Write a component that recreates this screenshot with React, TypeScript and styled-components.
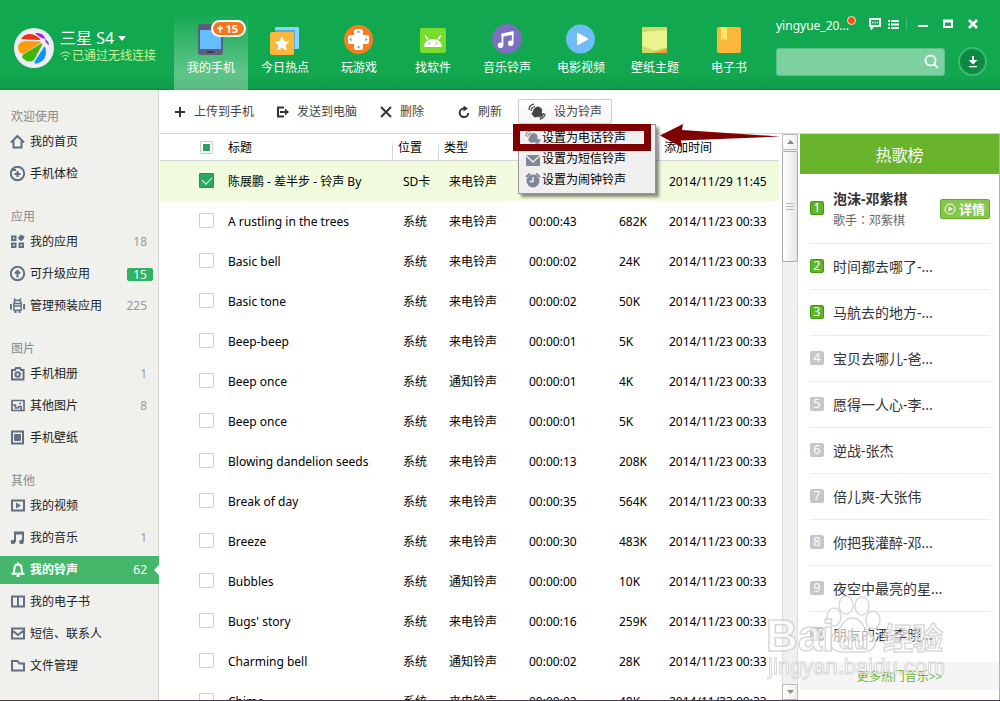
import React from "react";
import styled, { createGlobalStyle, css } from "styled-components";

const Global = createGlobalStyle`
  * { box-sizing: border-box; }
  body {
    margin: 0;
    background: #fff;
    color: #333;
    font-family: "Noto Sans", "Noto Sans CJK SC", sans-serif;
    font-size: 12px;
    line-height: 16px;
  }
  button, input { font: inherit; color: inherit; }
  button { border: 0; padding: 0; background: none; cursor: pointer; }
  a { color: inherit; text-decoration: none; }
  ul, ol { list-style: none; margin: 0; padding: 0; }
  svg { display: block; flex: none; }
`;

const Shell = styled.div`
  display: flex;
  flex-direction: column;
  height: 100vh;
  overflow: hidden;
  border-bottom: 1px solid #4a3c56;
`;

/* ---------- header ---------- */

const Header = styled.header`
  display: flex;
  flex: none;
  height: 90px;
  background: linear-gradient(#11a84f 0, #11a84f 74px, #109c49 88px, #0c8a3e 90px);
  color: #fff;
`;

const Brand = styled.div`
  display: flex;
  align-items: center;
  gap: 6px;
  flex: none;
  width: 174px;
  padding: 5px 0 0 14px;
`;

const BrandText = styled.div`
  display: flex;
  flex-direction: column;
  padding-bottom: 3px;
  white-space: nowrap;
`;

const DeviceButton = styled.button`
  display: flex;
  align-items: center;
  gap: 4px;
  font-size: 16px;
  line-height: 20px;
`;

const LinkState = styled.div`
  display: flex;
  align-items: center;
  gap: 1px;
  color: #c9f59a;
`;

const Nav = styled.nav`
  display: flex;
  flex: none;
  padding-top: 15px;
`;

const NavItem = styled.a<{ $active?: boolean }>`
  position: relative;
  display: flex;
  flex-direction: column;
  align-items: center;
  gap: 5px;
  width: 74px;
  padding-top: 8px;
  box-shadow: inset -1px 0 rgba(255, 255, 255, 0.03);
  ${(p) =>
    p.$active &&
    css`
      background: linear-gradient(rgba(255, 255, 255, 0.02), rgba(255, 255, 255, 0.32) 55px);
    `}
`;

const NavBadge = styled.span`
  position: absolute;
  top: 5px;
  right: 2px;
  display: flex;
  align-items: center;
  gap: 2px;
  height: 17px;
  padding: 0 6px 0 4px;
  border: 2px solid #fff;
  border-radius: 9px;
  background: #fb7318;
  font-size: 11px;
  font-weight: 700;
`;

const Tools = styled.div`
  display: flex;
  flex-direction: column;
  flex: 1;
  min-width: 0;
  gap: 12px;
  padding: 17px 13px 0 10px;
`;

const ToolRow = styled.div`
  display: flex;
  align-items: center;
  justify-content: space-between;
  height: 18px;
`;

const User = styled.a`
  position: relative;
  width: 82px;
  &::after {
    content: "";
    position: absolute;
    top: -2px;
    right: 2px;
    width: 7px;
    height: 7px;
    border: 1px solid #fde3d0;
    border-radius: 50%;
    background: #fb4d0c;
  }
`;

const WindowButtons = styled.div`
  display: flex;
  flex: none;
  align-items: center;
  padding: 0 9px 4px 0;
  gap: 15px;
`;

const IconPair = styled.div`
  display: flex;
  gap: 7px;
  margin-right: -4px;
  padding-right: 7px;
  border-right: 1px solid #3fb972;
`;

const SearchRow = styled.div`
  display: flex;
  align-items: center;
  gap: 13px;
`;

const Search = styled.label`
  display: flex;
  align-items: center;
  flex: 1;
  min-width: 0;
  height: 28px;
  padding-right: 5px;
  border: 1px solid #62bf86;
  border-radius: 3px;
  background: #7dd09f;
`;

const SearchInput = styled.input`
  flex: 1;
  width: 100%;
  min-width: 0;
  border: 0;
  outline: 0;
  background: transparent;
`;

const RoundButton = styled.button`
  display: grid;
  flex: none;
  place-items: center;
  width: 29px;
  height: 29px;
  border: 2px solid #3fb972;
  border-radius: 50%;
  background: #0b8a43;
`;

/* ---------- sidebar ---------- */

const Body = styled.div`
  display: flex;
  flex: 1;
  min-height: 0;
`;

const Sidebar = styled.aside`
  flex: none;
  width: 159px;
  padding-top: 19px;
  border-right: 1px solid #d6d6d4;
  background: #f0f0ec;
`;

const Group = styled.section`
  margin-bottom: 21px;
`;

const GroupTitle = styled.h2`
  margin: 0 0 3px 11px;
  font-size: 12px;
  line-height: 16px;
  font-weight: 400;
  color: #8a8a88;
`;

const SideList = styled.ul`
  display: flex;
  flex-direction: column;
  gap: 4px;
`;

const SideLink = styled.a<{ $active?: boolean }>`
  position: relative;
  display: flex;
  align-items: center;
  gap: 4px;
  height: 28px;
  padding: 0 11px 0 10px;
  color: #222;
  svg { color: #626e82; }
  ${(p) =>
    p.$active &&
    css`
      margin-right: -1px;
      padding-right: 12px;
      background: #44b76b;
      color: #fff;
      font-weight: 700;
      svg { color: #fff; }
      &::after {
        content: "";
        position: absolute;
        right: 0;
        top: 9px;
        border: 5px solid transparent;
        border-left-width: 0;
        border-right-color: #fff;
      }
    `}
`;

const Count = styled.span<{ $pill?: boolean; $light?: boolean }>`
  margin-left: auto;
  font-weight: 400;
  color: ${(p) => (p.$pill || p.$light ? "#fff" : "#999")};
  ${(p) =>
    p.$pill &&
    css`
      width: 26px;
      margin-right: -6px;
      border-radius: 2px;
      background: #2fb362;
      line-height: 13px;
      text-align: center;
    `}
`;

/* ---------- content ---------- */

const Content = styled.main`
  display: flex;
  flex-direction: column;
  flex: 1;
  min-width: 0;
`;

const Toolbar = styled.div`
  display: flex;
  align-items: center;
  gap: 23px;
  flex: none;
  height: 44px;
  padding-left: 15px;
  border-bottom: 1px solid #d6d6d6;
`;

const ToolGroup = styled.div`
  display: flex;
  align-items: center;
  gap: 16px;
  margin-left: 11px;
`;

const ToolButton = styled.button`
  display: flex;
  align-items: center;
  gap: 8px;
  color: #444;
`;

const Dropdown = styled.div`
  position: relative;
`;

const DropButton = styled.button`
  display: flex;
  align-items: center;
  gap: 8px;
  width: 94px;
  height: 25px;
  padding-left: 9px;
  border: 1px solid #ccc;
  border-radius: 2px;
  background: linear-gradient(#fff, #f4f4f4);
  color: #444;
`;

const Menu = styled.div`
  position: absolute;
  z-index: 2;
  top: 25px;
  left: 0;
  width: 138px;
  padding: 2px 0 3px;
  border: 1px solid #979797;
  background: #f0f0f0;
  box-shadow: 3px 3px 3px rgba(0, 0, 0, 0.45);
`;

const MenuItem = styled.button`
  display: flex;
  align-items: center;
  gap: 1px;
  width: 100%;
  height: 21px;
  padding-left: 6px;
  color: #000;
  line-height: 16px;
  svg { color: #7f8897; }
`;

const Marker = styled.div`
  position: absolute;
  z-index: 3;
  top: 25px;
  left: -5px;
  width: 138px;
  height: 27px;
  border: 7px solid #7f0000;
  pointer-events: none;
`;

const Arrow = styled.svg`
  position: absolute;
  z-index: 3;
  top: 24px;
  left: 142px;
  pointer-events: none;
`;

const Split = styled.div`
  display: flex;
  flex: 1;
  min-height: 0;
`;

const TableArea = styled.div`
  flex: 1;
  min-width: 0;
  overflow: hidden;
  padding: 0 3px 0 1px;
`;

const Table = styled.table`
  width: 100%;
  table-layout: fixed;
  border-collapse: separate;
  border-spacing: 0;
  color: #000;
  white-space: nowrap;
`;

const Th = styled.th<{ $line?: boolean }>`
  height: 27px;
  padding: 2px 0 0 ${(p) => (p.$line ? 6 : 0)}px;
  border-bottom: 1px solid #d6d6d6;
  font-weight: 400;
  text-align: left;
  ${(p) =>
    p.$line &&
    css`
      background: linear-gradient(transparent, #d6d6d6 8px) left bottom / 1px 20px no-repeat;
    `}
`;

const Row = styled.tr<{ $selected?: boolean }>`
  background: ${(p) => (p.$selected ? "#f1fcde" : "#fff")};
`;

const Td = styled.td<{ $inset?: boolean }>`
  height: 40px;
  padding: 2px 0 0 ${(p) => (p.$inset ? 11 : 0)}px;
`;

const CheckCell = styled.td`
  height: 40px;
  padding: 0 0 2px;
`;

const CheckHead = styled(Th)`
  padding-top: 0;
`;

const Check = styled.input<{ $small?: boolean }>`
  appearance: none;
  display: block;
  position: relative;
  width: ${(p) => (p.$small ? 13 : 15)}px;
  height: ${(p) => (p.$small ? 13 : 15)}px;
  margin: 0 0 0 ${(p) => (p.$small ? 40 : 39)}px;
  border: 1px solid #ccc;
  border-radius: 1px;
  background: #fff;
  ${(p) =>
    p.$small &&
    css`
      &::after {
        content: "";
        position: absolute;
        inset: 2px;
        background: #28a661;
      }
    `}
  &:checked {
    border-color: #1f9653;
    background: #2ba862;
  }
  &:checked::after {
    content: "";
    position: absolute;
    left: 4px;
    top: 1px;
    width: 5px;
    height: 8px;
    border: solid #fff;
    border-width: 0 1px 1px 0;
    transform: rotate(45deg);
  }
`;

const ScrollBar = styled.div`
  display: flex;
  flex-direction: column;
  flex: none;
  width: 16px;
  border: 1px solid #ddd;
  border-width: 0 1px;
  background: #f0f0f0;
`;

const ScrollButton = styled.button`
  display: grid;
  place-items: center;
  height: 16px;
  margin: 0 -1px;
  border: 1px solid #b9b9b9;
  border-radius: 1px;
  background: linear-gradient(90deg, #fff, #eee);
`;

const Thumb = styled.div`
  display: grid;
  place-items: center;
  height: 111px;
  margin: 1px -1px auto;
  border: 1px solid #a9a9a9;
  border-radius: 2px;
  background: linear-gradient(90deg, #fff, #e6e6e6);
`;

/* ---------- ranking ---------- */

const Ranking = styled.aside`
  display: flex;
  flex-direction: column;
  flex: none;
  width: 202px;
  padding: 0 0 0 1px;
  border-left: 1px solid #fff;
  border-right: 1px solid #a9b4b4;
`;

const RankTitle = styled.h2`
  margin: 0;
  flex: none;
  background: #6ab42b;
  color: #fff;
  font-size: 16px;
  line-height: 42px;
  height: 40px;
  font-weight: 400;
  text-align: center;
`;

const RankList = styled.ol`
  padding: 0 9px 0 10px;
`;

const RankItem = styled.li<{ $first?: boolean }>`
  display: flex;
  align-items: center;
  gap: 9px;
  height: ${(p) => (p.$first ? 70 : 46)}px;
  border-bottom: 1px solid #ececec;
  &:last-child { border-bottom: 0; }
`;

const Rank = styled.span<{ $hot?: boolean }>`
  flex: none;
  width: 14px;
  height: 14px;
  margin-bottom: 2px;
  border: 1px solid ${(p) => (p.$hot ? "#3f9a12" : "#c4c4c4")};
  border-radius: 2px;
  background: ${(p) => (p.$hot ? "#62b42a" : "#c8c8c8")};
  color: #fff;
  line-height: 12px;
  text-align: center;
`;

const Song = styled.a<{ $bold?: boolean }>`
  display: block;
  font-size: 14px;
  line-height: 20px;
  font-weight: ${(p) => (p.$bold ? 700 : 400)};
  color: #333;
  white-space: nowrap;
`;

const Singer = styled.div`
  margin-top: 4px;
  color: #666;
  font-family: "Noto Sans", "Noto Sans CJK TC", sans-serif;
`;

const Detail = styled.button`
  display: flex;
  align-items: center;
  gap: 3px;
  width: 50px;
  height: 20px;
  margin-left: auto;
  padding-left: 3px;
  border: 1px solid #62ae22;
  border-radius: 2px;
  background: #85c64b;
  color: #fff;
  font-size: 13px;
  font-weight: 700;
`;

const More = styled.a`
  flex: none;
  height: 28px;
  margin-top: 4px;
  background: #f5f5f5;
  color: #6ab42b;
  line-height: 30px;
  text-align: center;
`;

const Watermark = styled.svg`
  position: fixed;
  z-index: 5;
  right: 52px;
  bottom: 16px;
  pointer-events: none;
  font-family: "Liberation Sans", "Noto Sans CJK SC", sans-serif;
`;

/* ---------- drawings ---------- */

const Logo = () => (
  <svg width="40" height="40" viewBox="0 0 40 40">
    <circle cx="20" cy="20" r="20" fill="#ecedf5" />
    <path d="M7 11C11 5 19 4 26 11Q27 12 25 12Z" fill="#f92f0c" />
    <path d="M4.500 22C3 16 6 13 13 13L26 13.500Q28 14 26 15L11 25Q6 27 4.500 22Z" fill="#ff9a0b" />
    <path d="M8.500 30Q7 28 10 26L27 15.500Q29 15 27.500 18L20 32Q15 36 8.500 30Z" fill="#41b60a" />
    <path d="M21 33L30 19Q31 18 31.500 20Q34 32 23 35.500Q19 36 21 33Z" fill="#0d94fb" />
    <path d="M21 5Q29 4 31.500 11Q26 10 21 5Z" fill="#b213e8" />
    <path d="M31 11Q35 13 35 17Q31 15 31 11Z" fill="#8f45c7" />
  </svg>
);

const Wifi = () => (
  <svg width="11" height="10" viewBox="0 0 11 10" fill="none" stroke="currentColor">
    <path d="M.5 3.500Q5.500-1.500 10.500 3.500M2.500 5.500Q5.500 2.500 8.500 5.500" />
    <circle cx="5.500" cy="8" r="1.200" fill="currentColor" stroke="none" />
  </svg>
);

const navArt: Record<string, React.ReactNode> = {
  phone: (
    <>
      <rect x="3" y="1" width="25" height="31" rx="3" fill="#596078" />
      <rect x="5" y="7" width="21" height="19" fill="#65bcff" />
      <rect x="12" y="28" width="7" height="2" fill="#343b4d" />
    </>
  ),
  hot: (
    <>
      <rect x="6" y="4" width="24" height="22" rx="1" fill="#8bd4ff" />
      <path d="M6 7h20v19H6z" fill="#5aaede" />
      <rect x="1" y="9" width="24" height="23" rx="2" fill="#fbb73a" />
      <path d="M13 13l2.300 5 5.200.6-3.900 3.600 1.100 5.300-4.700-2.700-4.700 2.700 1.100-5.300-3.900-3.600 5.200-.6z" fill="#fff" />
    </>
  ),
  game: (
    <>
      <circle cx="15.500" cy="16.500" r="14.500" fill="#fd7d1c" />
      <path d="M13 6h5q2 0 2 2v4h4q2 0 2 2v5q0 2-2 2h-4v4q0 2-2 2h-5q-2 0-2-2v-4H7q-2 0-2-2v-5q0-2 2-2h4V8q0-2 2-2z" fill="#fff" />
      <path d="M13.500 9.500l2-2 2 2zM13.500 23.500l2 2 2-2zM8.500 14.500l-2 2 2 2zM22.500 14.500l2 2-2 2z" fill="#8b8b8b" />
    </>
  ),
  android: (
    <>
      <rect x="3" y="5" width="26" height="25" rx="2" fill="#78dc2c" />
      <path d="M7 24a9 8 0 0 1 18 0z" fill="#fff" />
      <path d="M8 12.500l3 4M24 12.500l-3 4" stroke="#fff" strokeWidth="1.500" />
      <circle cx="12.500" cy="20.500" r="1" fill="#78dc2c" />
      <circle cx="19.500" cy="20.500" r="1" fill="#78dc2c" />
    </>
  ),
  music: (
    <>
      <circle cx="16" cy="16" r="15" fill="#7c70c0" />
      <path d="M10.500 10.500L22.500 8v3.500l-12 2.500z" fill="#fff" />
      <path d="M11.500 11v11.500M21.700 9v11" stroke="#fff" strokeWidth="1.700" />
      <circle cx="9.500" cy="22.300" r="2.800" fill="#fff" />
      <circle cx="19.700" cy="20.300" r="2.800" fill="#fff" />
    </>
  ),
  video: (
    <>
      <circle cx="15.500" cy="16" r="14.500" fill="#6fbcf7" />
      <path d="M12 10.500q0-1.200 1.200-.6l9 5.200q1.200.9 0 1.800l-9 5.200q-1.200.6-1.200-.6z" fill="#fff" />
    </>
  ),
  wallpaper: (
    <>
      <rect x="3" y="4" width="25" height="26" rx="1" fill="#cddb67" />
      <path d="M3 9l25-2v17q-6 2-12 3.500L3 23z" fill="#e9f48e" />
      <path d="M28 25.500V30H14q7-2 14-4.500z" fill="#e99e39" />
    </>
  ),
  book: (
    <>
      <rect x="4" y="4" width="24" height="26" rx="2" fill="#fbb73a" />
      <path d="M8 4h6v14l-3-2.500L8 18z" fill="#fee66a" />
    </>
  ),
};

const sideArt: Record<string, React.ReactNode> = {
  home: <path d="M1 8.500L7.500 2 14 8.500M3.500 7v6.500h8V7" />,
  health: (
    <>
      <circle cx="7.500" cy="7.500" r="6.700" />
      <path d="M4.500 8h6M7.500 5v6M2 4h4" />
    </>
  ),
  apps: (
    <>
      <path d="M2 2.500h3.500V6H2zM2 9.500h3.500V13H2zM9.500 9.500H13V13H9.500z" />
      <path d="M11 .5l1.500 1 2 .5-.5 2.500-2.500 2.500-2.500-1L8 3.500z" fill="currentColor" stroke="none" />
    </>
  ),
  upgrade: (
    <>
      <circle cx="7.500" cy="7.500" r="6.700" />
      <path d="M7.500 11.500V5M5 7.500L7.500 5 10 7.500" />
    </>
  ),
  robot: (
    <>
      <path d="M3.800 5.500h7.400v6.700H3.800zM4 5Q4 2.200 7.500 2.200T11 5M3.800 8h7.400M4 .5l1.500 2M11 .5l-1.500 2" strokeWidth="1.400" />
      <path d="M.9 6v5.500M14.100 6v5.500M5.500 12.500V15M9.500 12.500V15" />
    </>
  ),
  camera: (
    <>
      <path d="M2 4h3l1-2h4l1 2h2.500v9.500H2z" />
      <circle cx="7.700" cy="8.500" r="2.200" />
    </>
  ),
  picture: <path d="M2 2.500h12v10H2zM2 7h3.500v3H8l1-1.500h2V12M9 5.500h2" strokeWidth="1.700" />,
  wall: (
    <>
      <path d="M2 1.500h11v12H2z" />
      <rect x="4" y="4" width="7" height="7" rx="1" fill="currentColor" stroke="none" />
    </>
  ),
  video: (
    <>
      <path d="M2 2.500h12v10H2z" />
      <path d="M6 4.500l5 3-5 3z" fill="currentColor" stroke="none" />
    </>
  ),
  music: (
    <>
      <path d="M5 12V3h8v8.500" />
      <path d="M4 1.500h10v3H4z" fill="currentColor" stroke="none" />
      <circle cx="3" cy="12" r="2.300" fill="currentColor" stroke="none" />
      <circle cx="11.500" cy="12" r="2.300" fill="currentColor" stroke="none" />
    </>
  ),
  bell: <path d="M1.500 11.700h13M3.700 11.500L4.700 5Q5 2.500 8 2.500T11.300 5l1 6.500M6.500 14h3M7 1.500h2" />,
  book: <path d="M2 2.500h12v10H2zM8 2.500v10" />,
  mail: <path d="M2 2.500h12v10H2zM3 5l5 4 5-4" />,
  folder: <path d="M2 12.500v-9.500h5.500l2 2.500h4.500v7z" />,
};

const SideIcon = ({ name }: { name: string }) => (
  <svg width="16" height="16" viewBox="0 0 16 16" fill="none" stroke="currentColor" strokeWidth="2">
    {sideArt[name]}
  </svg>
);

const RingBell = ({ size = 18 }: { size?: number }) => (
  <svg width={size} height={size} viewBox="0 0 18 18" fill="none" stroke="currentColor">
    <path d="M5 8q1-4 5-4.500 5 1 4 6l1 3.500-8.500 1.500L3.500 11z" fill="currentColor" stroke="none" />
    <path d="M1 7Q1 2 6 1.200M3 8q0-3.500 4-4.500M17 10.500q0 4-5 6M15.500 10q0 3-4 5" strokeWidth="1.200" />
  </svg>
);

/* ---------- data ---------- */

const navItems = [
  ["phone", "我的手机"],
  ["hot", "今日热点"],
  ["game", "玩游戏"],
  ["android", "找软件"],
  ["music", "音乐铃声"],
  ["video", "电影视频"],
  ["wallpaper", "壁纸主题"],
  ["book", "电子书"],
];

type Entry = { icon: string; label: string; count?: number; pill?: boolean; active?: boolean };

const groups: { title: string; items: Entry[] }[] = [
  {
    title: "欢迎使用",
    items: [
      { icon: "home", label: "我的首页" },
      { icon: "health", label: "手机体检" },
    ],
  },
  {
    title: "应用",
    items: [
      { icon: "apps", label: "我的应用", count: 18 },
      { icon: "upgrade", label: "可升级应用", count: 15, pill: true },
      { icon: "robot", label: "管理预装应用", count: 225 },
    ],
  },
  {
    title: "图片",
    items: [
      { icon: "camera", label: "手机相册", count: 1 },
      { icon: "picture", label: "其他图片", count: 8 },
      { icon: "wall", label: "手机壁纸" },
    ],
  },
  {
    title: "其他",
    items: [
      { icon: "video", label: "我的视频" },
      { icon: "music", label: "我的音乐", count: 1 },
      { icon: "bell", label: "我的铃声", count: 62, active: true },
      { icon: "book", label: "我的电子书" },
      { icon: "mail", label: "短信、联系人" },
      { icon: "folder", label: "文件管理" },
    ],
  },
];

const early = "2014/11/23 00:33";
const tones = [
  ["陈展鹏 - 差半步 - 铃声 By", "SD卡", "来电铃声", "", "", "2014/11/29 11:45"],
  ["A rustling in the trees", "系统", "来电铃声", "00:00:43", "682K", early],
  ["Basic bell", "系统", "来电铃声", "00:00:02", "24K", early],
  ["Basic tone", "系统", "来电铃声", "00:00:02", "50K", early],
  ["Beep-beep", "系统", "来电铃声", "00:00:01", "5K", early],
  ["Beep once", "系统", "通知铃声", "00:00:01", "4K", early],
  ["Beep once", "系统", "来电铃声", "00:00:01", "5K", early],
  ["Blowing dandelion seeds", "系统", "来电铃声", "00:00:13", "208K", early],
  ["Break of day", "系统", "来电铃声", "00:00:35", "564K", early],
  ["Breeze", "系统", "来电铃声", "00:00:30", "483K", early],
  ["Bubbles", "系统", "通知铃声", "00:00:00", "10K", early],
  ["Bugs' story", "系统", "来电铃声", "00:00:16", "259K", early],
  ["Charming bell", "系统", "通知铃声", "00:00:02", "28K", early],
  ["Chime", "系统", "来电铃声", "00:00:02", "48K", early],
];

const songs = [
  "泡沫-邓紫棋",
  "时间都去哪了-...",
  "马航去的地方-...",
  "宝贝去哪儿-爸...",
  "愿得一人心-李...",
  "逆战-张杰",
  "倍儿爽-大张伟",
  "你把我灌醉-邓...",
  "夜空中最亮的星...",
  "朋友的酒-李晓...",
];

const columns = ["68px", "auto", "46px", "80px", "90px", "50px", "121px"];

export default function App() {
  return (
    <Shell>
      <Global />
      <Header>
        <Brand>
          <Logo />
          <BrandText>
            <DeviceButton>
              三星 S4
              <svg width="8" height="5" viewBox="0 0 8 5">
                <path d="M0 0h8L4 5z" fill="#fff" />
              </svg>
            </DeviceButton>
            <LinkState>
              <Wifi />
              已通过无线连接
            </LinkState>
          </BrandText>
        </Brand>
        <Nav>
          {navItems.map(([icon, label], i) => (
            <NavItem key={icon} href="#" $active={i === 0}>
              <svg width="32" height="32" viewBox="0 0 32 32">
                {navArt[icon]}
              </svg>
              {label}
              {i === 0 && (
                <NavBadge>
                  <svg width="6" height="8" viewBox="0 0 6 8" fill="none" stroke="#fff" strokeWidth="1.500">
                    <path d="M3 8V1.500M.5 4L3 1.500 5.500 4" />
                  </svg>
                  15
                </NavBadge>
              )}
            </NavItem>
          ))}
        </Nav>
        <Tools>
          <ToolRow>
            <User href="#">yingyue_20...</User>
            <WindowButtons>
              <IconPair>
                <button aria-label="消息">
                  <svg width="12" height="12" viewBox="0 0 12 12">
                    <path d="M1 1h10v7H4.500L2.500 10.500V8H1z" fill="none" stroke="#fff" strokeWidth="2" />
                    <path d="M3 4.500h1.300M5.400 4.500h1.300M7.800 4.500h1.300" stroke="#fff" strokeWidth="1.500" />
                  </svg>
                </button>
                <button aria-label="菜单">
                  <svg width="11" height="12" viewBox="0 0 11 12" stroke="#fff" strokeWidth="2">
                    <path d="M0 3h2M3 3h8M0 6.500h2M3 6.500h8M0 10h2M3 10h8" />
                  </svg>
                </button>
              </IconPair>
              <button aria-label="最小化">
                <svg width="10" height="11" viewBox="0 0 10 11">
                  <path d="M0 7h10" stroke="#fff" strokeWidth="2" />
                </svg>
              </button>
              <button aria-label="最大化">
                <svg width="10" height="10" viewBox="0 0 10 10">
                  <path d="M1 2v6h8V2z" fill="none" stroke="#fff" strokeWidth="2" />
                  <path d="M0 2h10" stroke="#fff" strokeWidth="3" />
                </svg>
              </button>
              <button aria-label="关闭">
                <svg width="10" height="10" viewBox="0 0 10 10">
                  <path d="M1 1l8 8M9 1L1 9" stroke="#fff" strokeWidth="2.500" />
                </svg>
              </button>
            </WindowButtons>
          </ToolRow>
          <SearchRow>
            <Search>
              <SearchInput type="text" aria-label="搜索" />
              <svg width="15" height="15" viewBox="0 0 15 15" fill="none" stroke="#effaf3" strokeWidth="2">
                <circle cx="6.500" cy="6.500" r="5" />
                <path d="M10 10l4 4" />
              </svg>
            </Search>
            <RoundButton aria-label="下载">
              <svg width="10" height="12" viewBox="0 0 10 12">
                <path d="M4 0h2v4h3.500L5 8.500.5 4H4zM1 10h8v1.300H1z" fill="#fff" />
              </svg>
            </RoundButton>
          </SearchRow>
        </Tools>
      </Header>

      <Body>
        <Sidebar>
          {groups.map((group) => (
            <Group key={group.title}>
              <GroupTitle>{group.title}</GroupTitle>
              <SideList>
                {group.items.map((item) => (
                  <li key={item.label}>
                    <SideLink href="#" $active={item.active}>
                      <SideIcon name={item.icon} />
                      {item.label}
                      {item.count !== undefined && (
                        <Count $pill={item.pill} $light={item.active}>
                          {item.count}
                        </Count>
                      )}
                    </SideLink>
                  </li>
                ))}
              </SideList>
            </Group>
          ))}
        </Sidebar>

        <Content>
          <Toolbar>
            <ToolButton>
              <svg width="12" height="12" viewBox="0 0 12 12" stroke="#333" strokeWidth="2">
                <path d="M1 6h10M6 1v10" />
              </svg>
              上传到手机
            </ToolButton>
            <ToolButton>
              <svg width="12" height="12" viewBox="0 0 12 12" fill="none" stroke="#333" strokeWidth="2">
                <path d="M7 1.500H1v9h6" />
                <path d="M3 6h6" />
                <path d="M8 2.500L12 6 8 9.500z" fill="#333" stroke="none" />
              </svg>
              发送到电脑
            </ToolButton>
            <ToolButton>
              <svg width="12" height="12" viewBox="0 0 12 12" stroke="#333" strokeWidth="2">
                <path d="M1 1l10 10M11 1L1 11" />
              </svg>
              删除
            </ToolButton>
            <ToolGroup>
              <ToolButton>
                <svg width="12" height="12" viewBox="0 0 12 12" fill="none" stroke="#333" strokeWidth="2">
                  <path d="M6 2.500A4.300 4.300 0 1 0 10.300 7" />
                  <path d="M5.500-.5L10 2.500 5.500 5.500z" fill="#333" stroke="none" />
                </svg>
                刷新
              </ToolButton>
              <Dropdown>
                <DropButton aria-haspopup="menu" aria-expanded="true">
                  <RingBell />
                  设为铃声
                </DropButton>
                <Menu role="menu">
                  <MenuItem role="menuitem">
                    <RingBell size={16} />
                    设置为电话铃声
                  </MenuItem>
                  <MenuItem role="menuitem">
                    <svg width="16" height="16" viewBox="0 0 16 16">
                      <path d="M1 4h14v11H1z" fill="currentColor" />
                      <path d="M1 4.500l7 6.500 7-6.500" fill="none" stroke="#f0f0f0" strokeWidth="1.300" />
                    </svg>
                    设置为短信铃声
                  </MenuItem>
                  <MenuItem role="menuitem">
                    <svg width="16" height="16" viewBox="0 0 16 16">
                      <circle cx="8" cy="9" r="6.500" fill="currentColor" />
                      <path d="M1 5L5 1.500M15 5l-4-3.500" stroke="currentColor" strokeWidth="2" />
                      <path d="M8 5v4.500H4.500" fill="none" stroke="#f0f0f0" strokeWidth="1.500" />
                    </svg>
                    设置为闹钟铃声
                  </MenuItem>
                </Menu>
                <Marker />
                <Arrow width="122" height="26" viewBox="0 0 122 26">
                  <path d="M0 12.500L23 1 22 7l98 6.500-99 4 1 7z" fill="#7f0000" />
                </Arrow>
              </Dropdown>
            </ToolGroup>
          </Toolbar>

          <Split>
            <TableArea>
              <Table>
                <colgroup>
                  {columns.map((width, i) => (
                    <col key={i} style={{ width }} />
                  ))}
                </colgroup>
                <thead>
                  <tr>
                    <CheckHead>
                      <Check type="checkbox" $small aria-label="全选" />
                    </CheckHead>
                    <Th>标题</Th>
                    <Th $line>位置</Th>
                    <Th $line>类型</Th>
                    <Th $line />
                    <Th $line />
                    <Th $line>添加时间</Th>
                  </tr>
                </thead>
                <tbody>
                  {tones.map(([title, ...rest], i) => (
                    <Row key={i} $selected={i === 0}>
                      <CheckCell>
                        <Check type="checkbox" defaultChecked={i === 0} aria-label={title} />
                      </CheckCell>
                      <Td>{title}</Td>
                      {rest.map((value, j) => (
                        <Td key={j} $inset>
                          {value}
                        </Td>
                      ))}
                    </Row>
                  ))}
                </tbody>
              </Table>
            </TableArea>
            <ScrollBar>
              <ScrollButton aria-label="向上">
                <svg width="7" height="4" viewBox="0 0 7 4">
                  <path d="M0 4L3.500 0 7 4z" fill="#8a8a8a" />
                </svg>
              </ScrollButton>
              <Thumb>
                <svg width="8" height="8" viewBox="0 0 8 8" stroke="#bbb">
                  <path d="M0 .5h8M0 3.500h8M0 6.500h8" />
                </svg>
              </Thumb>
              <ScrollButton aria-label="向下">
                <svg width="7" height="4" viewBox="0 0 7 4">
                  <path d="M0 0L3.500 4 7 0z" fill="#8a8a8a" />
                </svg>
              </ScrollButton>
            </ScrollBar>
            <Ranking>
              <RankTitle>热歌榜</RankTitle>
              <RankList>
                {songs.map((song, i) => (
                  <RankItem key={song} $first={i === 0}>
                    <Rank $hot={i < 3}>{i + 1}</Rank>
                    <div>
                      <Song href="#" $bold={i === 0}>
                        {song}
                      </Song>
                      {i === 0 && <Singer>歌手：邓紫棋</Singer>}
                    </div>
                    {i === 0 && (
                      <Detail>
                        <svg width="12" height="12" viewBox="0 0 12 12">
                          <circle cx="6" cy="6" r="5" fill="none" stroke="#fff" />
                          <path d="M4.500 3.500L9 6 4.500 8.500z" fill="#fff" />
                        </svg>
                        详情
                      </Detail>
                    )}
                  </RankItem>
                ))}
              </RankList>
              <More href="#">更多热门音乐&gt;&gt;</More>
            </Ranking>
          </Split>
        </Content>
      </Body>

      <Watermark width="182" height="90" viewBox="0 0 182 90" aria-hidden="true">
        <g fill="#fff" fillOpacity="0.6" stroke="#c8c8c8" strokeOpacity="0.7" strokeWidth="1.500">
          <ellipse cx="80" cy="10" rx="7" ry="9" />
          <ellipse cx="96" cy="11" rx="7" ry="9" />
          <ellipse cx="68" cy="22" rx="7" ry="9" />
          <ellipse cx="107" cy="25" rx="7" ry="9" />
          <path d="M86 23q8 0 12 9 12 8 11 17-2 8-12 8H76q-11-1-12-9 0-8 11-16 4-9 11-9z" />
          <text x="0" y="56" fontSize="44" fontWeight="700">
            Bai
          </text>
          <text x="73" y="54" fontSize="24" fontWeight="700">
            du
          </text>
          <text x="117" y="54" fontSize="30" fontWeight="700">
            经验
          </text>
          <text x="2" y="79" fontSize="22" strokeWidth="1">
            jingyan.baidu.com
          </text>
        </g>
      </Watermark>
    </Shell>
  );
}
